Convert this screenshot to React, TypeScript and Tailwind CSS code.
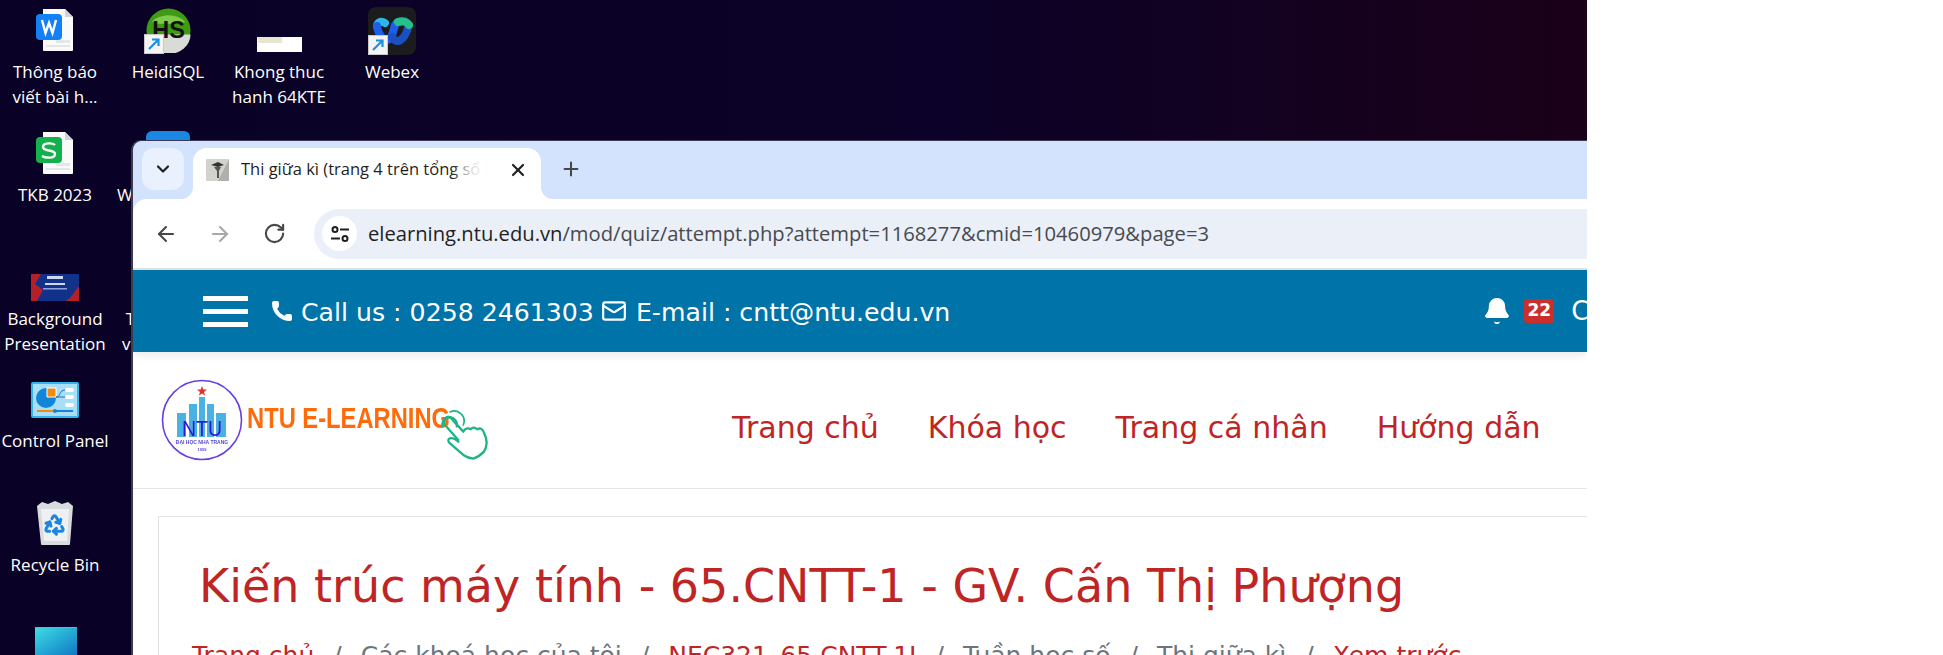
import { Bell, Phone, Mail, ArrowLeft, ArrowRight, RotateCw, ChevronDown, X, Plus, Recycle } from 'lucide-react';
import type { ReactNode } from 'react';

const shortcut = (
  <span className="absolute left-0 bottom-0 flex h-5 w-5 items-center justify-center bg-[#f4f4f4] border border-[#c9c9c9]">
    <svg width="14" height="14" viewBox="0 0 14 14" fill="none" stroke="#1a8fe3" strokeWidth="2.2">
      <path d="M2 12 11 3M5 2.5h6.5V9" />
    </svg>
  </span>
);

function DocIcon({ color, letter }: { color: string; letter: ReactNode }) {
  return (
    <svg width="38" height="44" viewBox="0 0 38 44">
      <path d="M7 1h22l8 8v33a1 1 0 0 1-1 1H8a1 1 0 0 1-1-1z" fill="#fafafa" />
      <path d="M29 1l8 8h-8z" fill="#cfd4da" />
      <path d="M20 32h14v3H20zM10 37h24v2H10z" fill="#e4e7ea" />
      <rect x="0" y="6" width="26" height="26" rx="4" fill={color} />
      {letter}
    </svg>
  );
}

function DesktopItem({ left, top, width, gap = 8, label, children }: { left: number; top: number; width: number; gap?: number; label: string[]; children?: ReactNode }) {
  return (
    <div className="absolute flex flex-col items-center" style={{ left, top, width }}>
      <div className="flex h-[56px] items-end justify-center" style={{ marginBottom: gap }}>
        {children}
      </div>
      <div className="font-['Open_Sans','Noto_Sans',sans-serif] text-[17px] leading-[24.5px] text-white text-center whitespace-nowrap">
        {label.map((l) => (
          <div key={l}>{l}</div>
        ))}
      </div>
    </div>
  );
}

function Desktop() {
  return (
    <>
      <DesktopItem left={0} top={-4} width={110} label={['Thông báo', 'viết bài h...']}>
        <DocIcon color="#1480f5" letter={<path d="M6 12l3.5 13 3.5-10 3.5 10L20 12" fill="none" stroke="#fff" strokeWidth="2.4" />} />
      </DesktopItem>
      <DesktopItem left={113} top={-4} width={110} label={['HeidiSQL']}>
        <div className="relative h-[46px] w-[48px] translate-y-[2px]">
          <svg width="45" height="45" viewBox="0 0 46 46" className="absolute left-[2px] top-0">
            <circle cx="23" cy="23" r="22.5" fill="#3f9a14" />
            <path d="M.5 27h45a22.500 20 0 0 1-45 0z" fill="#d9dcd6" />
            <path d="M6 14a20 14 0 0 1 34 0l-6 2H12z" fill="#7fca4a" />
            <text x="23" y="31" textAnchor="middle" fontFamily="Liberation Sans" fontWeight="700" fontSize="24" fill="#111">HS</text>
          </svg>
          {shortcut}
        </div>
      </DesktopItem>
      <DesktopItem left={224} top={-4} width={110} label={['Khong thuc', 'hanh 64KTE']}>
        <div className="h-[15px] w-[45px] bg-white">
          <div className="ml-[1px] h-[6px] w-[24px] bg-[#e8e6cf]" />
        </div>
      </DesktopItem>
      <DesktopItem left={337} top={-4} width={110} label={['Webex']}>
        <div className="relative h-[48px] w-[48px] translate-y-[3px] rounded-[8px] bg-[#1c1c1e]">
          <svg width="48" height="48" viewBox="0 0 48 48" className="absolute left-0 top-0" fill="none" strokeWidth="8" strokeLinecap="round">
            <path d="M9 19c1-5 5-5 8-3" stroke="#2bb8e8" />
            <path d="M9 19c2 12 10 18 14 11s2-15 9-15" stroke="#1d5fe8" />
            <path d="M24 30c4 7 12 6 17-12" stroke="#1c4ec4" />
            <path d="M30 15c5-2 9 0 11 3" stroke="#25c08c" />
          </svg>
          {shortcut}
        </div>
      </DesktopItem>

      <DesktopItem left={0} top={119} width={110} label={['TKB 2023']}>
        <DocIcon color="#12b14c" letter={<path d="M19 14c-2-2-12-3-12 2 0 5 12 2 12 7s-10 4-13 2" fill="none" stroke="#fff" strokeWidth="2.4" />} />
      </DesktopItem>
      <DesktopItem left={113} top={119} width={110} label={['WampServer']}>
        <div className="h-[44px] w-[44px] rounded-[6px] bg-[#1a87e5]" />
      </DesktopItem>

      <DesktopItem left={0} top={245} width={110} gap={6} label={['Background', 'Presentation']}>
        <svg width="48" height="27" viewBox="0 0 48 27">
          <rect width="48" height="27" fill="#12328a" />
          <path d="M0 0h10L4 10l8 6-6 11H0z" fill="#b3202a" />
          <path d="M48 12v15H34c6-2 8-8 14-15z" fill="#b3202a" />
          <rect x="14" y="9" width="20" height="2" fill="#cfd7ef" />
          <rect x="12" y="14" width="24" height="1.500" fill="#8fa3dc" />
          <rect x="16" y="2" width="16" height="3" fill="#cfd7ef" />
        </svg>
      </DesktopItem>
      <DesktopItem left={113} top={245} width={110} gap={6} label={['Thực hành', 'về máy tính']} />

      <DesktopItem left={0} top={362} width={110} gap={11} label={['Control Panel']}>
        <svg width="48" height="36" viewBox="0 0 48 36">
          <rect width="48" height="36" rx="2" fill="#35b4ea" />
          <rect x="2" y="2" width="44" height="32" fill="#a9dff6" />
          <circle cx="15" cy="16" r="10" fill="#1185d8" />
          <path d="M16 6h9v9h-9z" fill="#f08a10" stroke="#fff" />
          <path d="M25 15c5 0 3-7 9-7M25 15h9" stroke="#1a6fb8" fill="none" />
          <rect x="34" y="6" width="9" height="4" rx="2" fill="#fff" />
          <rect x="34" y="13" width="9" height="4" rx="2" fill="#fff" />
          <rect x="34" y="21" width="9" height="4" rx="2" fill="#fff" />
          <path d="M6 29h16" stroke="#f08a10" strokeWidth="2" />
          <path d="M22 29h20" stroke="#1185d8" strokeWidth="2" />
          <circle cx="24" cy="29" r="2" fill="#1185d8" />
        </svg>
      </DesktopItem>
      <DesktopItem left={0} top={489} width={110} label={['Recycle Bin']}>
        <div className="relative h-[44px] w-[36px]">
          <svg width="36" height="44" viewBox="0 0 36 44" className="absolute left-0 top-0">
            <path d="M0 5l5-4 6 2 7-3 7 3 6-2 5 4-3 38a1 1 0 0 1-1 1H5a1 1 0 0 1-1-1z" fill="#d9dcdf" />
            <path d="M4 8h28l-2 32H7z" fill="#eef0f2" />
          </svg>
          <Recycle size={23} strokeWidth={3.2} color="#1b86dc" className="absolute left-[6px] top-[12px]" />
        </div>
      </DesktopItem>
      <div className="absolute left-[35px] top-[627px] h-[28px] w-[42px] border-t border-[#8aa] bg-gradient-to-br from-[#3fdde3] to-[#1478c4]" />
    </>
  );
}

function Logo() {
  return (
    <svg width="370" height="90" viewBox="0 0 370 90" className="blur-[0.4px]">
      <circle cx="42" cy="45" r="39.500" fill="#fff" stroke="#6a3fe0" strokeWidth="1.6" />
      <path d="M42 11l1.300 3.600h3.700l-3 2.300 1.100 3.700-3.100-2.200-3.100 2.200 1.100-3.700-3-2.300h3.700z" fill="#e0312a" />
      <rect x="17" y="38" width="9" height="24" fill="#49b2e3" />
      <rect x="29" y="29" width="8" height="33" fill="#49b2e3" />
      <rect x="39" y="22" width="6" height="40" fill="#49b2e3" />
      <rect x="47" y="29" width="7" height="33" fill="#49b2e3" />
      <rect x="56" y="38" width="10" height="24" fill="#49b2e3" />
      <text x="42" y="61" textAnchor="middle" fontFamily="Liberation Sans" fontSize="22" fill="#2a18d8" textLength="40" lengthAdjust="spacingAndGlyphs">NTU</text>
      <text x="42" y="69" textAnchor="middle" fontFamily="Liberation Sans" fontWeight="700" fontSize="5" fill="#5a48d0">ĐẠI HỌC NHA TRANG</text>
      <text x="42" y="76" textAnchor="middle" fontFamily="Liberation Sans" fontWeight="700" fontSize="4" fill="#5a48d0">1959</text>
      <text x="87" y="53" fontFamily="Liberation Sans" fontWeight="700" fontSize="30" fill="#ff6a0a" textLength="203" lengthAdjust="spacingAndGlyphs">NTU E-LEARNING</text>
      <g transform="translate(-30 -15) scale(.3333)" fill="none" stroke="#1db586" strokeLinecap="round" strokeLinejoin="round">
        <path strokeWidth="6" d="M938 200A22 22 0 1 1 980 200" />
        <path strokeWidth="5" d="M960 156A30 30 0 0 1 1000 195" />
        <path strokeWidth="5" d="M945 185A12 12 0 0 1 968 178" />
        <path strokeWidth="7" d="M985 240L945 195Q935 178 950 172Q960 168 970 182L1000 215Q1008 200 1022 208Q1030 198 1042 208Q1055 200 1062 218Q1078 250 1062 275Q1048 290 1030 296Q1015 295 1000 285L960 250Q950 240 960 235Q970 232 985 245" />
      </g>
    </svg>
  );
}

function Browser() {
  return (
    <div className="absolute left-[131px] top-[140px] flex h-[515px] w-[1456px] flex-col overflow-hidden rounded-tl-[10px] border-l-2 border-t border-[#3e3a50] bg-[#d3e3fd] font-['Open_Sans',sans-serif]">
      {/* tab strip */}
      <div className="flex h-[58px] shrink-0 items-start pt-[7px] pl-[9px]">
        <button className="flex h-[42px] w-[42px] items-center justify-center rounded-[12px] bg-[#e9f0fe]">
          <ChevronDown size={20} strokeWidth={2.6} color="#1f1f1f" />
        </button>
        <div className="relative ml-[9px] flex h-[51px] w-[348px] items-center rounded-t-[14px] bg-white pl-[13px] pb-[8px]">
          <span className="absolute -left-[12px] bottom-0 h-[12px] w-[12px] bg-white">
            <span className="block h-full w-full rounded-br-[12px] bg-[#d3e3fd]" />
          </span>
          <span className="absolute -right-[12px] bottom-0 h-[12px] w-[12px] bg-white">
            <span className="block h-full w-full rounded-bl-[12px] bg-[#d3e3fd]" />
          </span>
          <svg width="23" height="22" viewBox="0 0 23 22" className="shrink-0">
            <rect width="23" height="22" rx="1" fill="#d2d2ce" />
            <path d="M23 0v22H12z" fill="#8d8d88" opacity=".5" />
            <path d="M5 6l7-3 6 3-6 2z" fill="#333" />
            <path d="M8 8h7l-2 4v7h-2v-7z" fill="#555" />
          </svg>
          <span className="relative ml-[12px] w-[247px] shrink-0 overflow-hidden whitespace-nowrap text-[16.5px] text-[#1f1f1f]">
            Thi giữa kì (trang 4 trên tổng số 5)
            <span className="absolute right-0 top-0 h-full w-[36px] bg-gradient-to-r from-transparent via-white/80 to-white" />
          </span>
          <X size={20} strokeWidth={2.6} color="#1f1f1f" className="ml-[20px] shrink-0" />
        </div>
        <Plus size={22} strokeWidth={2.2} color="#474747" className="ml-[19px] mt-[10px]" />
      </div>

      {/* toolbar */}
      <div className="flex h-[69px] shrink-0 items-center rounded-tl-[14px] bg-white pl-[21px]">
        <ArrowLeft size={24} strokeWidth={2.1} color="#474747" />
        <ArrowRight size={24} strokeWidth={2.1} color="#a8a8a8" className="ml-[30px]" />
        <RotateCw size={23} strokeWidth={2.2} color="#474747" className="ml-[31px]" />
        <div className="ml-[28px] flex h-[50px] flex-1 items-center rounded-l-full bg-[#ebeff7] pl-[8px]">
          <span className="flex h-[35px] w-[35px] items-center justify-center rounded-full bg-white">
            <svg width="20" height="18" viewBox="0 0 20 18" fill="none" stroke="#1f1f1f" strokeWidth="2">
              <circle cx="5" cy="4.500" r="2.500" />
              <path d="M10 4.500h9M1 13.500h9" />
              <circle cx="15" cy="13.500" r="2.500" />
            </svg>
          </span>
          <span className="ml-[11px] whitespace-nowrap text-[20.2px] text-[#474a4f]">
            <span className="text-[#1f1f1f]">elearning.ntu.edu.vn</span>
            /mod/quiz/attempt.php?attempt=1168277&amp;cmid=10460979&amp;page=3
          </span>
        </div>
      </div>
      <div className="h-[2px] shrink-0 bg-[#e1e3e1]" />

      {/* page */}
      <div className="flex-1 bg-white font-['DejaVu_Sans',sans-serif]">
        <div className="flex h-[82px] items-center bg-[#0073a8] pl-[70px] text-white shadow-[0_4px_8px_rgba(0,0,0,0.08)]">
          <div className="flex w-[45px] shrink-0 flex-col gap-[8px]">
            <span className="h-[5px] bg-white" />
            <span className="h-[5px] bg-white" />
            <span className="h-[5px] bg-white" />
          </div>
          <Phone size={24} fill="#fff" strokeWidth={0} className="ml-[22px] shrink-0" />
          <span className="ml-[7px] whitespace-nowrap pt-[3px] text-[25.2px]">Call us : 0258 2461303</span>
          <Mail size={26} strokeWidth={2} className="ml-[7px] shrink-0" />
          <span className="ml-[9px] whitespace-nowrap pt-[3px] text-[25.2px]">E-mail : cntt@ntu.edu.vn</span>
          <Bell size={30} fill="#fff" strokeWidth={1} className="ml-[532px] shrink-0" />
          <span className="ml-[12px] flex h-[24px] w-[30px] shrink-0 items-center justify-center rounded-[3px] bg-[#c9302c] text-[17px] font-bold">22</span>
          <span className="ml-[17px] text-[26px]">C</span>
        </div>

        <div className="flex h-[137px] items-center border-b border-[#e6e6e6] pl-[27px]">
          <Logo />
          <nav className="ml-[202px] mt-[15px] flex gap-[49px] whitespace-nowrap text-[30px] text-[#c02525]">
            <span>Trang chủ</span>
            <span>Khóa học</span>
            <span>Trang cá nhân</span>
            <span>Hướng dẫn</span>
          </nav>
        </div>

        <div className="ml-[25px] mt-[27px] w-[1500px] border border-[#e3e3e3] pl-[40px] pt-[39px]">
          <h1 className="whitespace-nowrap text-[46px] leading-[60px] text-[#c02525]">
            Kiến trúc máy tính - 65.CNTT-1 - GV. Cấn Thị Phượng
          </h1>
          <div className="-ml-[7px] mt-[21px] flex gap-[19px] whitespace-nowrap text-[25px] text-[#6c757d]">
            <span className="text-[#c02525]">Trang chủ</span>
            <span>/</span>
            <span>Các khoá học của tôi</span>
            <span>/</span>
            <span className="text-[#c02525]">NEC321_65.CNTT-1I</span>
            <span>/</span>
            <span>Tuần học số</span>
            <span>/</span>
            <span>Thi giữa kì</span>
            <span>/</span>
            <span className="text-[#c02525]">Xem trước</span>
          </div>
        </div>
      </div>
    </div>
  );
}

export default function App() {
  return (
    <div className="flex h-[655px] w-full overflow-hidden bg-white">
      <div className="relative h-full w-[1587px] shrink-0 overflow-hidden bg-gradient-to-r from-[#0a0226] via-[#0c0128] via-60% to-[#1a0018]">
        <Desktop />
        <Browser />
      </div>
    </div>
  );
}
